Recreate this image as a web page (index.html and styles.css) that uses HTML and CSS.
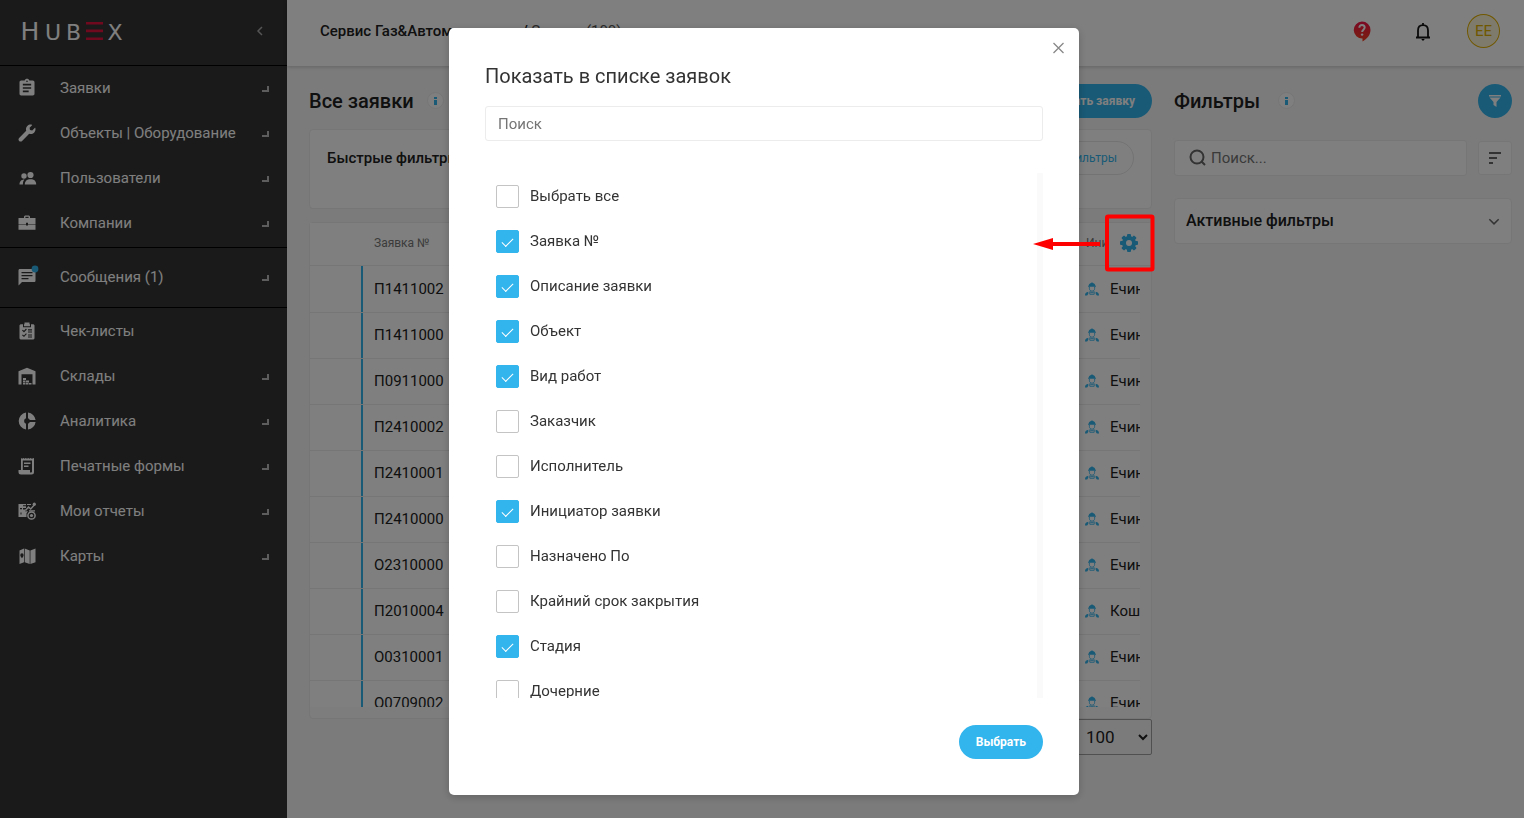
FILE: index.html
```html
<!DOCTYPE html>
<html lang="ru">
<head>
<meta charset="utf-8">
<title>HubEx — Все заявки</title>
<link rel="stylesheet" href="styles.css">
</head>
<body>
<svg class="sprite" aria-hidden="true">
  <symbol id="worker" viewBox="0 0 16 16">
    <path d="M3.500 5.500V4.300h.700C4.400 2.300 5.800 1.400 7.200 1.200V.600h1.600v.600c1.400.200 2.800 1.100 3 3.100h.700v1.200z" fill="currentColor"/>
    <path d="M5 5.500v1.800C5 9.300 6.300 10.500 8 10.500s3-1.200 3-3.200V5.500M5.500 11l2.500 1.500 2.500-1.500M5.500 11v3h5v-3" fill="none" stroke="currentColor"/>
    <path d="M0 15.500c0-2.800 1-4 3.800-4.500v2.500L2.500 15.500zM16 15.500c0-2.800-1-4-3.800-4.500v2.500l1.300 2z" fill="currentColor"/>
  </symbol>
</svg>

<div class="app">
  <aside class="sidebar">
    <div class="brand">
      <svg class="logo" viewBox="0 0 104 24" role="img" aria-label="HubEx">
        <g class="logo-text"><text class="logo-big" x="10" y="21">H</text><text x="33 53.500 95" y="21">UBX</text></g>
        <path d="M66 3h17v2.600H66zM66 10.600h17v2.600H66zM66 18.400h17V21H66z" fill="#e0123c"/>
      </svg>
      <button class="collapse" aria-label="Свернуть меню"><svg viewBox="0 0 6 10"><path d="M5 1 1 5l4 4"/></svg></button>
    </div>
    <nav>
      <ul class="menu">
        <li><a href="#"><svg viewBox="0 0 24 24"><path d="M19 3h-4.180C14.400 1.840 13.300 1 12 1s-2.400.840-2.820 2H5c-1.100 0-2 .900-2 2v14c0 1.100.900 2 2 2h14c1.100 0 2-.900 2-2V5c0-1.100-.900-2-2-2zm-7 0c.550 0 1 .450 1 1s-.450 1-1 1-1-.450-1-1 .450-1 1-1zm2 14H7v-2h7v2zm3-4H7v-2h10v2zm0-4H7V7h10v2z"/></svg><span>Заявки</span><i></i></a></li>
        <li><a href="#"><svg viewBox="-45 -45 602 602"><path d="M507.730 109.100c-2.240-9.030-13.540-12.090-20.120-5.510l-74.360 74.360-67.880-11.310-11.310-67.880 74.360-74.360c6.620-6.620 3.430-17.900-5.660-20.160-47.380-11.740-99.550.910-136.580 37.930-39.640 39.640-50.550 97.100-34.050 147.200L18.740 402.760c-24.990 24.990-24.990 65.510 0 90.500 24.990 24.990 65.510 24.990 90.500 0l213.210-213.210c50.120 16.710 107.470 5.680 147.370-34.220 37.070-37.070 49.700-89.320 37.910-136.730z"/></svg><span>Объекты | Оборудование</span><i></i></a></li>
        <li><a href="#"><svg viewBox="0 0 20 20"><circle cx="13.500" cy="7" r="3.100"/><path d="M7.800 16.500c0-3.400 2-5.300 5.700-5.300s5.700 1.900 5.700 5.300z"/><circle cx="7" cy="8" r="2.700"/><path d="M2.500 16.500c0-2.800 1.500-4.800 5-4.900-1.200 1.200-1.600 2.800-1.600 4.900z"/></svg><span>Пользователи</span><i></i></a></li>
        <li><a href="#"><svg viewBox="0 0 20 20"><path d="M7 5V3.500L8 2.400h4l1 1.100V5h5.500v6H11V9.700H9V11H1.500V5zm1.400 0h3.200V3.800H8.400zM1.500 11.500H9v1h2v-1h7.500v5.300h-17z"/></svg><span>Компании</span><i></i></a></li>
      </ul>
      <ul class="menu menu-messages">
        <li><a href="#"><svg viewBox="0 0 20 20"><path d="M3 2h14c1 0 1.500.500 1.500 1.500v10c0 1-.500 1.500-1.500 1.500H5l-3.500 3.500v-15C1.500 2.500 2 2 3 2zm1.500 3v1.300h11V5zm0 3v1.300h11V8zm0 3v1.300h7V11z"/><circle class="unread" cx="18" cy="2" r="3.400"/></svg><span>Сообщения (1)</span><i></i></a></li>
      </ul>
      <ul class="menu">
        <li><a href="#"><svg viewBox="0 0 20 20"><path fill-rule="evenodd" d="M7 3.200h.500V1.500h5v1.700h.500v2H7zM3.500 3.200H6v3h8v-3h2.500l1 1v13.300l-1 1h-13l-1-1V4.200zM5 9.600l2 1.800 2.800-3-.8-.8-2 2.100-1.200-1zm0 4.700 2 1.800 2.800-3-.8-.8-2 2.100-1.200-1zM11 8.300v1.200h4V8.300zm0 2.200v1h4v-1zm0 3v1h4v-1zm0 2v1h4v-1z"/></svg><span>Чек-листы</span></a></li>
        <li><a href="#"><svg viewBox="0 0 20 20"><path d="M1.500 18.500V5.300L10 1.700l8.500 3.600v13.200h-3V8.200h-11v10.300z"/><path d="M6 12h3v2H6zM6 14.500h2.500v2H6zM9 14.500h3v2H9zM6 17h2.500v1.500H6zM9 17h2.500v1.500H9zM12 17h2.500v1.500H12z"/></svg><span>Склады</span><i></i></a></li>
        <li><a href="#"><svg viewBox="0 0 20 20"><path d="M9 1.500v5.700a3 3 0 0 0 0 5.600v5.700a8.600 8.600 0 0 1 0-17zM11 1.500A8.600 8.600 0 0 1 18.600 9h-5.800A3 3 0 0 0 11 7.200zM18.600 11a8.600 8.600 0 0 1-7.600 7.500v-5.700A3 3 0 0 0 12.800 11z"/></svg><span>Аналитика</span><i></i></a></li>
        <li><a href="#"><svg viewBox="0 0 20 20"><path fill-rule="evenodd" d="M4 2l1.200.8L6.400 2l1.200.8L8.800 2l1.200.8 1.200-.8 1.200.8 1.200-.8 1.200.8L17 2v14a2.500 2.500 0 0 1-2.500 2.500H4A2.500 2.500 0 0 1 1.500 16v-2H4zm1.800 2.400V14H13v2.500h.8c.7 0 1.200-.3 1.200-1V4.400zM7 6.500h6.500V8H7zm0 3h4.500V11H7z"/></svg><span>Печатные формы</span><i></i></a></li>
        <li><a href="#"><svg viewBox="0 0 20 20"><path fill-rule="evenodd" d="M1.500 3H9v1.300H6v1h3V7H6v1.500h3l-1 1.800h3l-1.500 2v3.700h-8zM3 8.300h2V7H3zM3.500 11.500v2h1v-2z"/><path d="m8.500 9.500 3-3.500 2.200 2 4-4.500" fill="none" stroke="currentColor" stroke-width="1.400"/><circle cx="17.300" cy="3.200" r="1.600"/><path d="M10 3h4v1h-4zM12 9.200h6v1.200h-6z"/><circle cx="14.500" cy="14.500" r="3.600" fill="none" stroke="currentColor" stroke-width="1.500"/><circle cx="14.500" cy="14.500" r="1.600"/></svg><span>Мои отчеты</span><i></i></a></li>
        <li><a href="#"><svg viewBox="0 0 20 20"><path fill-rule="evenodd" d="M2.500 4.500 7 2.500v13.800l-4.500 1.800zM5 7.200a1.900 1.900 0 0 0-1.700 2c0 1.200 1 1.800 1.700 3.100.7-1.300 1.600-1.900 1.600-3.100a1.800 1.800 0 0 0-1.600-2zM7.700 2.500l5 2v13.600l-5-1.800zM13.400 4.500l5.100-2v13.800l-5.100 1.800z"/></svg><span>Карты</span><i></i></a></li>
      </ul>
    </nav>
  </aside>

  <div class="page">
    <header class="topbar">
      <div class="crumbs"><a href="#">Сервис Газ&amp;Автоматизация</a> / <span>Заявки (100)</span></div>
      <div class="tools">
        <button aria-label="Помощь"><svg class="help" viewBox="0 0 18 21"><defs><linearGradient id="helpFill" x1="0" y1="0" x2="0" y2="1"><stop offset="0" stop-color="#f5124a"/><stop offset="1" stop-color="#f5401c"/></linearGradient></defs><path d="M9 .500A8.500 8.500 0 0 1 17.500 9c0 5-3.500 9-8 11.500v-3A8.500 8.500 0 1 1 9 .500z" fill="url(#helpFill)"/><path d="M6.300 6.800C6.300 5 7.500 4 9 4s2.700 1 2.700 2.600c0 1.900-2.600 2.300-2.600 4.400" fill="none" stroke="#fff" stroke-width="1.900"/><circle cx="9.100" cy="13.600" r="1.200" fill="#fff"/></svg></button>
        <button aria-label="Уведомления"><svg class="bell" viewBox="0 0 16 19"><path d="M1 15.500h14M3 15V8.500C3 5.300 5 3.200 8 3.200s5 2.100 5 5.300V15M8 3V1" fill="none" stroke="#151515" stroke-width="1.800"/><path d="M6.200 17h3.600L8 19z"/></svg></button>
        <button class="avatar">EE</button>
      </div>
    </header>

    <div class="content">
      <main class="orders">
        <div class="heading">
          <h1>Все заявки</h1>
          <button class="info" aria-label="Справка"></button>
          <button class="primary push">Создать заявку</button>
        </div>
        <section class="card quick">
          <h2>Быстрые фильтры</h2>
          <button class="outline">Все фильтры</button>
        </section>
        <section class="card grid">
          <div class="grid-head">
            <span class="col-number">Заявка №</span>
            <span class="col-author">Инициатор</span>
            <button class="gear" aria-label="Настройка столбцов"><svg viewBox="0 0 18 18"><g fill="#32b4ec"><circle cx="9" cy="9" r="7"/><rect x="7" y="0" width="4" height="18" rx="1"/><rect x="7" y="0" width="4" height="18" rx="1" transform="rotate(45 9 9)"/><rect x="7" y="0" width="4" height="18" rx="1" transform="rotate(90 9 9)"/><rect x="7" y="0" width="4" height="18" rx="1" transform="rotate(135 9 9)"/></g><circle cx="9" cy="9" r="3" fill="#fff"/></svg></button>
          </div>
          <div class="grid-body">
            <table>
              <colgroup><col class="c-mark"><col><col class="c-author"></colgroup>
              <tbody>
                <tr><td></td><td class="num">П1411002</td><td class="who"><svg><use href="#worker"/></svg>Ечин</td></tr>
                <tr><td></td><td class="num">П1411000</td><td class="who"><svg><use href="#worker"/></svg>Ечин</td></tr>
                <tr><td></td><td class="num">П0911000</td><td class="who"><svg><use href="#worker"/></svg>Ечин</td></tr>
                <tr><td></td><td class="num">П2410002</td><td class="who"><svg><use href="#worker"/></svg>Ечин</td></tr>
                <tr><td></td><td class="num">П2410001</td><td class="who"><svg><use href="#worker"/></svg>Ечин</td></tr>
                <tr><td></td><td class="num">П2410000</td><td class="who"><svg><use href="#worker"/></svg>Ечин</td></tr>
                <tr><td></td><td class="num">О2310000</td><td class="who"><svg><use href="#worker"/></svg>Ечин</td></tr>
                <tr><td></td><td class="num">П2010004</td><td class="who"><svg><use href="#worker"/></svg>Кошелев</td></tr>
                <tr><td></td><td class="num">О0310001</td><td class="who"><svg><use href="#worker"/></svg>Ечин</td></tr>
                <tr><td></td><td class="num">О0709002</td><td class="who"><svg><use href="#worker"/></svg>Ечин</td></tr>
              </tbody>
            </table>
          </div>
        </section>
        <select class="page-size" aria-label="Строк на странице"><option>100</option></select>
      </main>

      <aside class="filters">
        <div class="heading">
          <h1>Фильтры</h1>
          <button class="info info-far" aria-label="Справка"></button>
          <button class="round push" aria-label="Применить фильтр"><svg viewBox="0 0 12 12"><path d="M0 0h12v1.500H0zM.500 2.500h11L7.500 7v5l-3-2V7z" fill="#fff"/></svg></button>
        </div>
        <div class="search-row">
          <label class="search"><svg viewBox="0 0 18 18"><path d="m12.800 12.800 3.200 3.200M14.500 8A6.500 6.500 0 1 1 1.500 8a6.500 6.500 0 0 1 13 0z" fill="none" stroke="#666" stroke-width="2"/></svg><input type="text" placeholder="Поиск..." aria-label="Поиск фильтра"></label>
          <button class="sort" aria-label="Сортировка"><svg viewBox="0 0 12 12"><path d="M0 1h12M0 6h8M0 11h4" stroke="#666" stroke-width="1.800"/></svg></button>
        </div>
        <button class="card active-filters">Активные фильтры<svg viewBox="0 0 10 6"><path d="m1 1 4 4 4-4" fill="none" stroke="#666" stroke-width="1.300"/></svg></button>
      </aside>
    </div>
  </div>
</div>

<div class="overlay">
  <div class="modal" role="dialog" aria-labelledby="modal-title">
    <button class="close" aria-label="Закрыть"><svg viewBox="0 0 12 12"><path d="m1 1 10 10M11 1 1 11"/></svg></button>
    <h2 class="modal-title" id="modal-title">Показать в списке заявок</h2>
    <input class="modal-search" type="text" placeholder="Поиск" aria-label="Поиск">
    <div class="options">
      <label><input type="checkbox">Выбрать все</label>
      <label><input type="checkbox" checked>Заявка №</label>
      <label><input type="checkbox" checked>Описание заявки</label>
      <label><input type="checkbox" checked>Объект</label>
      <label><input type="checkbox" checked>Вид работ</label>
      <label><input type="checkbox">Заказчик</label>
      <label><input type="checkbox">Исполнитель</label>
      <label><input type="checkbox" checked>Инициатор заявки</label>
      <label><input type="checkbox">Назначено По</label>
      <label><input type="checkbox">Крайний срок закрытия</label>
      <label><input type="checkbox" checked>Стадия</label>
      <label><input type="checkbox">Дочерние</label>
    </div>
    <button class="primary submit">Выбрать</button>
  </div>
</div>

<svg class="callout" viewBox="0 0 122 58" aria-hidden="true">
  <rect x="74" y="2.500" width="45.500" height="53" rx="1" fill="none" stroke="#f00" stroke-width="4"/>
  <path d="M19 30h48" stroke="#f00" stroke-width="4"/>
  <path d="M0 30l20-6v12z" fill="#f00"/>
</svg>
</body>
</html>
```
FILE: styles.css
```css
* { box-sizing: border-box; }

body {
  margin: 0;
  font: 15px/20px Roboto, "Liberation Sans", sans-serif;
  color: #212121;
  overflow: hidden;
}

button, input, select { font: inherit; color: inherit; }
button { padding: 0; border: 0; background: none; cursor: pointer; }
a { color: inherit; text-decoration: none; }
h1, h2 { margin: 0; font-weight: 500; }
svg { display: block; flex: none; }
.sprite { display: none; }

.app {
  display: grid;
  grid-template-columns: 287px 1fr;
  height: 100vh;
}

/* Sidebar */
.sidebar { background: #343434; color: #fff; }
.brand {
  display: flex;
  align-items: center;
  justify-content: space-between;
  height: 66px;
  padding: 0 24px 4px 20px;
  border-bottom: 1px solid #000;
}
.logo { width: 104px; height: 24px; overflow: visible; }
.logo-text {
  font-family: "DejaVu Sans", sans-serif;
  font-size: 22px;
  fill: #fff;
  text-anchor: middle;
}
.logo-big { font-size: 25px; }
.collapse svg { width: 6px; height: 10px; fill: none; stroke: #aaa; stroke-width: 1.500; overflow: visible; }
.menu { margin: 0; padding: 0; list-style: none; }
.menu a {
  display: flex;
  align-items: center;
  height: 45px;
  padding: 0 18px 2px 17px;
}
.menu svg {
  width: 20px;
  height: 20px;
  margin-right: 23px;
  fill: currentColor;
  overflow: visible;
}
.menu span { flex: 1; }
.menu i {
  width: 7px;
  height: 6px;
  margin-top: 3px;
  border: solid #bbb;
  border-width: 0 2px 2px 0;
}
.menu .unread { fill: #32b4ec; }
.menu-messages {
  padding: 7px 0;
  border: solid #000;
  border-width: 1px 0;
  margin: 1px 0;
}

/* Page */
.page {
  display: flex;
  flex-direction: column;
  min-width: 0;
  background: #f7f7f7;
}
.topbar {
  display: flex;
  align-items: center;
  justify-content: space-between;
  height: 66px;
  padding: 0 24px 4px 33px;
  background: #fff;
  box-shadow: 0 1px 4px rgba(0, 0, 0, .2);
}
.crumbs { font-weight: 500; }
.crumbs span { color: #555; font-weight: 400; }
.tools { display: flex; align-items: center; }
.help { width: 18px; height: 21px; }
.bell { width: 16px; height: 19px; margin: 0 36px 0 44px; }
.avatar {
  width: 33px;
  height: 34px;
  border: 1px solid #e0b000;
  border-radius: 50%;
  background: #fff6d8;
  color: #e0b000;
}

.content {
  display: grid;
  grid-template-columns: 1fr 338px;
  gap: 22px;
  padding: 18px 12px 0 22px;
}
.orders { display: flex; flex-direction: column; min-width: 0; }
.heading { display: flex; align-items: center; height: 33px; margin-bottom: 12px; }
.heading h1 { font-size: 20px; }
.push { margin-left: auto; }
.info {
  display: grid;
  justify-items: center;
  align-content: center;
  gap: 1px;
  width: 17px;
  height: 17px;
  margin-left: 13px;
  border: 1px solid #ececec;
  border-radius: 50%;
  background: #fff;
}
.info-far { margin-left: 18px; }
.info::before, .info::after { content: ""; width: 3px; height: 2px; background: #32b4ec; }
.info::after { height: 5px; }

.primary {
  height: 34px;
  padding: 0 17px;
  border-radius: 17px;
  background: #32b4ec;
  color: #fff;
  font-size: 12px;
  font-weight: 700;
}
.card { border: 1px solid #ececec; border-radius: 4px; background: #fff; }
.quick {
  display: flex;
  justify-content: space-between;
  height: 80px;
  padding: 11px 17px;
  margin-bottom: 13px;
}
.quick h2 { font-size: 15px; line-height: 34px; }
.outline {
  height: 34px;
  padding: 0 16px;
  border: 1px solid #e6e6e6;
  border-radius: 17px;
  color: #32b4ec;
  font-size: 12px;
}

.grid { height: calc(100vh - 321px); padding: 0 11px 11px 0; background: #fbfbfb; }
.grid-head {
  display: flex;
  align-items: center;
  height: 43px;
  margin-right: -11px;
  padding: 0 13px 2px 64px;
  border-bottom: 1px solid #ececec;
  background: #fff;
  color: #777;
  font-size: 12px;
}
.col-author { width: 20px; margin: 0 14px 0 auto; overflow: hidden; }
.gear svg { width: 18px; height: 18px; }
.grid-body { height: calc(100% - 43px); overflow: hidden; }
.grid table { width: 100%; table-layout: fixed; border-collapse: collapse; background: #fff; }
.c-mark { width: 51px; }
.c-author { width: 55px; }
.grid td { height: 46px; padding: 0; border-bottom: 1px solid #ececec; }
.grid .num {
  padding-left: 13px;
  background: linear-gradient(#32b4ec, #32b4ec) 0 0 / 2px 100% no-repeat;
}
.who { overflow: hidden; white-space: nowrap; }
.who svg { display: inline-block; width: 14px; height: 14px; margin-right: 11px; vertical-align: -2px; color: #32b4ec; }

.page-size {
  align-self: flex-end;
  width: 76px;
  height: 36px;
  padding: 0 5px;
  border: 1px solid #a0a0a0;
  border-radius: 2px;
  background-color: transparent;
  font-size: 17px;
}

/* Filters */
.filters { display: flex; flex-direction: column; }
.filters .heading { margin-bottom: 23px; }
.round {
  display: grid;
  place-items: center;
  width: 34px;
  height: 34px;
  border-radius: 50%;
  background: #32b4ec;
}
.round svg, .sort svg { width: 12px; height: 12px; }
.search-row { display: flex; align-items: center; gap: 11px; margin-bottom: 22px; }
.search {
  display: flex;
  align-items: center;
  flex: 1;
  height: 36px;
  padding: 0 14px;
  border: 1px solid #ececec;
  border-radius: 3px;
  background: #fff;
}
.search svg { width: 18px; height: 18px; margin-right: 4px; }
.search input { flex: 1; min-width: 0; padding: 0; border: 0; background: none; }
::placeholder { color: #757575; opacity: 1; }
.sort {
  display: grid;
  place-items: center;
  width: 34px;
  height: 34px;
  border: 1px solid #ececec;
  border-radius: 3px;
  background: #fff;
}
.active-filters {
  display: flex;
  align-items: center;
  justify-content: space-between;
  height: 46px;
  padding: 0 11px;
  font-size: 16px;
  font-weight: 500;
}
.active-filters svg { width: 12px; height: 7px; }

/* Column picker */
.overlay {
  position: fixed;
  inset: 0;
  display: flex;
  justify-content: center;
  align-items: flex-start;
  padding: 28px 0 0 4px;
  background: rgba(0, 0, 0, .5);
}
.modal {
  position: relative;
  display: flex;
  flex-direction: column;
  width: 630px;
  padding: 36px;
  border-radius: 5px;
  background: #fff;
  box-shadow: 0 2px 8px rgba(0, 0, 0, .2);
  color: #333;
}
.close { position: absolute; top: 14px; right: 14px; }
.close svg { width: 13px; height: 12px; fill: none; stroke: #888; stroke-width: 1.300; }
.modal-title { font-size: 20px; line-height: 24px; font-weight: 400; margin-bottom: 18px; }
.modal-search {
  height: 35px;
  padding: 0 12px;
  border: 1px solid #ececec;
  border-radius: 3px;
  margin-bottom: 32px;
}
.options {
  height: calc(100vh - 293px);
  padding: 0 11px;
  overflow: hidden;
  border-right: 6px solid #fafafa;
  margin-bottom: 27px;
}
.options label { display: flex; align-items: center; gap: 11px; height: 45px; }
.options input {
  appearance: none;
  display: grid;
  place-items: center;
  width: 23px;
  height: 23px;
  margin: 2px 0 0;
  border: 1px solid #c4c4c4;
  border-radius: 2px;
}
.options input:checked { border-color: #32b4ec; background: #32b4ec; }
.options input:checked::after {
  content: "";
  width: 10px;
  height: 5px;
  border: solid #fff;
  border-width: 0 0 1px 1px;
  transform: translateY(-1px) rotate(-45deg);
}
.submit { align-self: flex-end; }

.callout {
  position: absolute;
  top: 214px;
  right: 369px;
  width: 122px;
  height: 58px;
}
```
